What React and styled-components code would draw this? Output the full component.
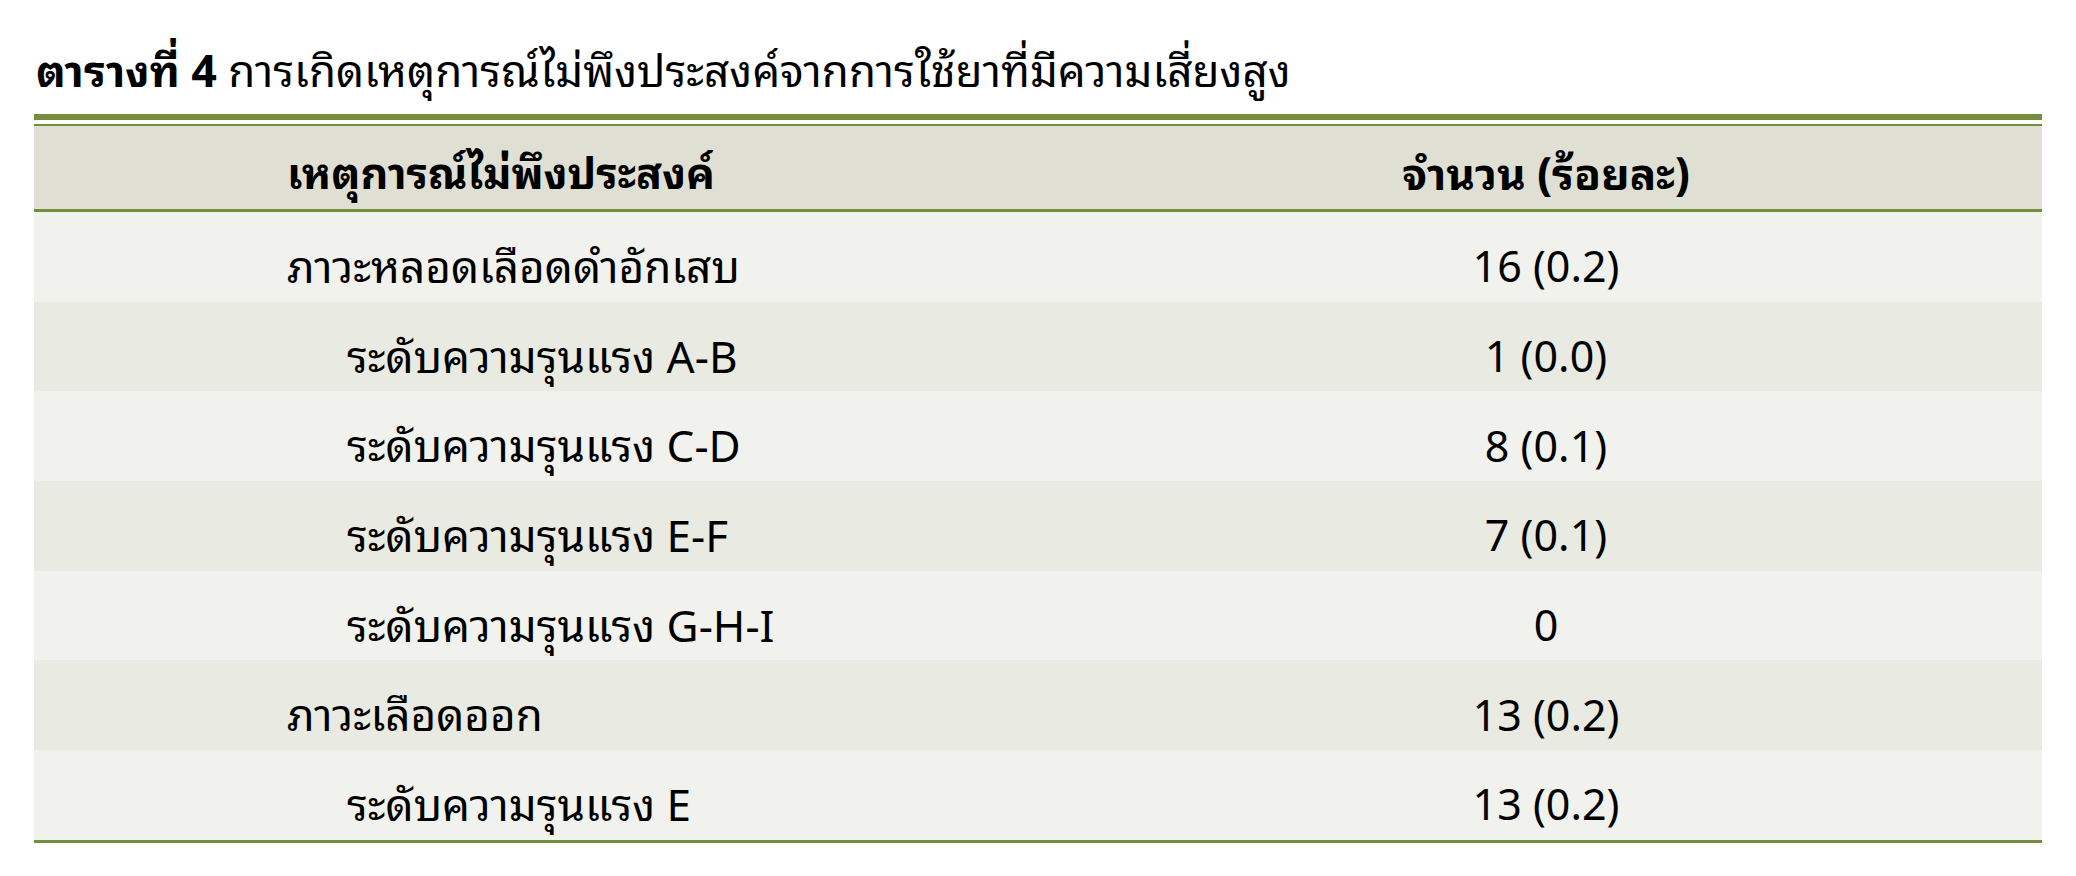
import React from 'react';
import styled, { createGlobalStyle } from 'styled-components';

const GlobalStyle = createGlobalStyle`
  html, body {
    margin: 0;
    padding: 0;
    background: #ffffff;
  }
  body {
    font-family: "Noto Sans Thai Looped", "Loma", "Garuda", "Noto Sans Thai", "Noto Sans", "Liberation Sans", sans-serif;
    color: #000000;
  }
`;

const green = '#738f3e';

const Page = styled.div`
  width: 2076px;
  height: 876px;
  padding: 26px 34px 0 34px;
  box-sizing: border-box;
`;

const Caption = styled.div`
  font-size: 44px;
  line-height: 82px;
  height: 88px;
  padding-left: 2px;
  white-space: nowrap;

  b {
    font-weight: 700;
  }
`;

const Table = styled.div`
  width: 2008px;
  border-top: 6px solid ${green};
`;

const TopGap = styled.div`
  height: 4px;
  border-bottom: 2px solid ${green};
`;

const Row = styled.div`
  display: grid;
  grid-template-columns: 1016px 1fr;
  align-items: center;
  box-sizing: border-box;
  height: ${p => (p.$head ? '86px' : '89.7px')};
  padding-top: ${p => (p.$head ? '4px' : '12px')};
  background: ${p => (p.$head ? '#dfe0d3' : p.$alt ? '#e9eae2' : '#f1f2ed')};
  border-bottom: ${p => (p.$head ? `3px solid ${green}` : 'none')};
  font-weight: ${p => (p.$head ? 700 : 400)};
`;

const Label = styled.div`
  padding-left: ${p => (p.$sub ? '313px' : '253px')};
  white-space: nowrap;
  font-size: ${p => (p.$head ? '43px' : '44px')};
`;

const Value = styled.div`
  text-align: center;
  white-space: nowrap;
  font-size: ${p => (p.$head ? '44px' : '43px')};
`;

const BottomRule = styled.div`
  border-top: 3px solid ${green};
`;

const rows = [
  { label: 'ภาวะหลอดเลือดดำอักเสบ', value: '16 (0.2)' },
  { label: 'ระดับความรุนแรง A-B', value: '1 (0.0)', sub: true },
  { label: 'ระดับความรุนแรง C-D', value: '8 (0.1)', sub: true },
  { label: 'ระดับความรุนแรง E-F', value: '7 (0.1)', sub: true },
  { label: 'ระดับความรุนแรง G-H-I', value: '0', sub: true },
  { label: 'ภาวะเลือดออก', value: '13 (0.2)' },
  { label: 'ระดับความรุนแรง E', value: '13 (0.2)', sub: true },
];

export default function App() {
  return (
    <>
      <GlobalStyle />
      <Page>
        <Caption>
          <b>ตารางที่ 4</b> การเกิดเหตุการณ์ไม่พึงประสงค์จากการใช้ยาที่มีความเสี่ยงสูง
        </Caption>
        <Table>
          <TopGap />
          <Row $head>
            <Label $head>เหตุการณ์ไม่พึงประสงค์</Label>
            <Value $head>จำนวน (ร้อยละ)</Value>
          </Row>
          {rows.map((r, i) => (
            <Row key={i} $alt={i % 2 === 1}>
              <Label $sub={r.sub}>{r.label}</Label>
              <Value>{r.value}</Value>
            </Row>
          ))}
          <BottomRule />
        </Table>
      </Page>
    </>
  );
}
